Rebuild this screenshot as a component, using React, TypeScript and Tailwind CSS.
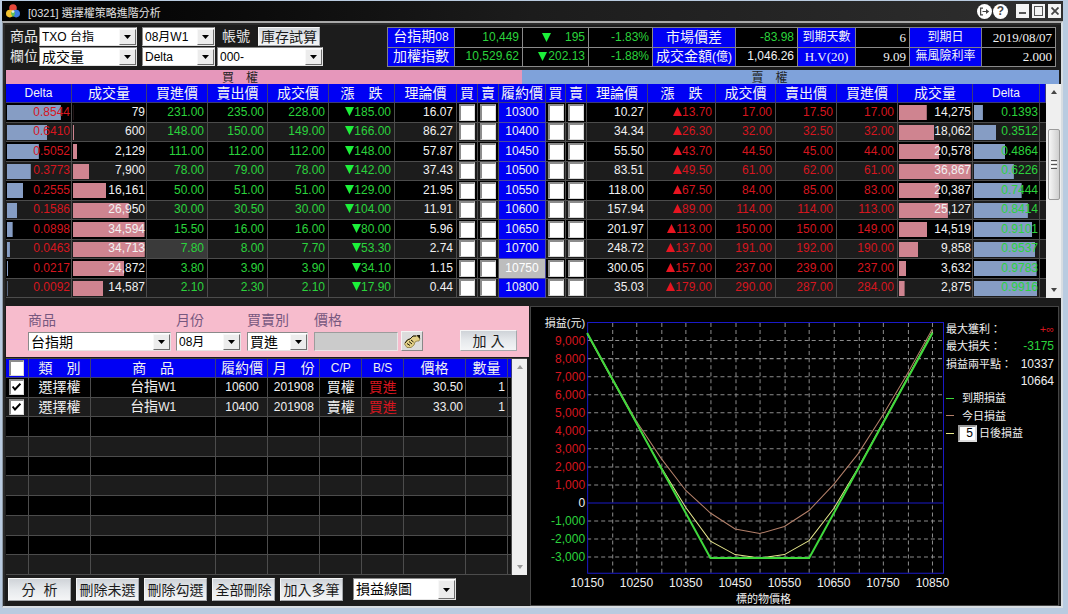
import React from "react";

type Tone = "green" | "red" | "white";

const toneClass: Record<Tone, string> = {
  green: "text-[#2bd33c]",
  red: "text-[#d6161f]",
  white: "text-[#f2f2f2]",
};

interface Side {
  delta: string;
  volume: string;
  bid: string;
  ask: string;
  last: string;
  change: string;
  theory: string;
}

interface OptionRow {
  strike: string;
  call: Side;
  put: Side;
}

const raw: string[][] = [
  ["0.8544", "79", "231.00", "235.00", "228.00", "185.00", "16.07", "10300", "10.27", "13.70", "17.00", "17.50", "17.00", "14,275", "0.1393"],
  ["0.6410", "600", "148.00", "150.00", "149.00", "166.00", "86.27", "10400", "34.34", "26.30", "32.00", "32.50", "32.00", "18,062", "0.3512"],
  ["0.5052", "2,129", "111.00", "112.00", "112.00", "148.00", "57.87", "10450", "55.50", "43.70", "44.50", "45.00", "44.00", "20,578", "0.4864"],
  ["0.3773", "7,900", "78.00", "79.00", "78.00", "142.00", "37.43", "10500", "83.51", "49.50", "61.00", "62.00", "61.00", "36,867", "0.6226"],
  ["0.2555", "16,161", "50.00", "51.00", "51.00", "129.00", "21.95", "10550", "118.00", "67.50", "84.00", "85.00", "83.00", "20,387", "0.7444"],
  ["0.1586", "26,950", "30.00", "30.50", "30.00", "104.00", "11.91", "10600", "157.94", "89.00", "114.00", "114.00", "113.00", "25,127", "0.8414"],
  ["0.0898", "34,594", "15.50", "16.00", "16.00", "80.00", "5.96", "10650", "201.97", "113.00", "150.00", "150.00", "149.00", "14,519", "0.9101"],
  ["0.0463", "34,713", "7.80", "8.00", "7.70", "53.30", "2.74", "10700", "248.72", "137.00", "191.00", "192.00", "190.00", "9,858", "0.9537"],
  ["0.0217", "24,872", "3.80", "3.90", "3.90", "34.10", "1.15", "10750", "300.05", "157.00", "237.00", "239.00", "237.00", "3,632", "0.9783"],
  ["0.0092", "14,587", "2.10", "2.30", "2.10", "17.90", "0.44", "10800", "35.03", "179.00", "290.00", "287.00", "284.00", "2,875", "0.9916"],
];

const options: OptionRow[] = raw.map((r) => ({
  strike: r[7],
  call: { delta: r[0], volume: r[1], bid: r[2], ask: r[3], last: r[4], change: r[5], theory: r[6] },
  put: { theory: r[8], change: r[9], last: r[10], ask: r[11], bid: r[12], volume: r[13], delta: r[14] },
}));

const toNumber = (s: string) => Number(s.replace(/,/g, ""));
const maxCall = Math.max(...options.map((o) => toNumber(o.call.volume)));
const maxPut = Math.max(...options.map((o) => toNumber(o.put.volume)));

interface SelectProps {
  label: string;
  value: string;
  className: string;
  latin?: boolean;
  id?: string;
}

function Select({ label, value, className, latin, id }: SelectProps) {
  return (
    <span className={`relative inline-flex shrink-0 ${className}`}>
      <select
        id={id}
        aria-label={label}
        defaultValue={value}
        className={`h-full w-full appearance-none border border-[#8a8a8a] border-r-[#e4e4e4] border-b-[#e4e4e4] bg-white pl-[2px] leading-[16px] text-black outline-none ${
          latin ? "text-[12px]" : "text-[14px]"
        }`}
      >
        <option>{value}</option>
      </select>
      <span className="pointer-events-none absolute top-[2px] right-[1px] bottom-[1px] flex w-[17px] items-center justify-center border border-[#f8f8f8] border-r-[#6e6e6e] border-b-[#6e6e6e] bg-[#ececec]">
        <svg viewBox="0 0 7 4" className="h-1 w-[7px]" aria-hidden="true">
          <path d="M0 0h7L3.5 4z" fill="#000" />
        </svg>
      </span>
    </span>
  );
}

function PushButton({ children, className }: { children: React.ReactNode; className: string }) {
  return (
    <button
      type="button"
      className={`shrink-0 border border-[#f6f6f6] border-r-[#a5a8ac] border-b-[#a5a8ac] bg-linear-to-b from-[#cfd3d8] via-[#e6e9ec] to-[#f4f5f6] text-[14px] leading-[18px] whitespace-pre text-[#1a1a1a] ${className}`}
    >
      {children}
    </button>
  );
}

function TitleBar() {
  return (
    <header className="flex h-[20px] items-center bg-linear-to-r from-[#020202] via-[#1c1c1c] to-[#2f2f2f] pr-[2px] pl-1">
      <svg viewBox="0 0 14 14" className="h-[14px] w-[14px]" aria-hidden="true">
        <circle cx="7" cy="4" r="3.8" fill="#e8483a" />
        <circle cx="3.8" cy="9.6" r="3.8" fill="#f2c230" />
        <circle cx="10.2" cy="9.6" r="3.8" fill="#3d7be0" />
        <path d="M7 6.2a3.8 3.8 0 0 0-1.6 4.6L7 13.2l1.6-2.4A3.8 3.8 0 0 0 7 6.2z" fill="#5fbf5a" />
        <circle cx="7" cy="7.6" r="1.4" fill="#fff" opacity=".8" />
      </svg>
      <h1 className="ml-[8px] pt-1 text-[11px] leading-[16px] text-[#e0e0e0]">[0321] 選擇權策略進階分析</h1>
      <div className="ml-auto flex items-center">
        <button type="button" aria-label="匯出" className="flex h-[15px] w-[15px] items-center justify-center rounded-full bg-white">
          <svg viewBox="0 0 11 9" className="h-[9px] w-[11px]" fill="none" stroke="#444" strokeWidth="1.2">
            <path d="M4 1.1H1.600v6.800H4M3.500 4.500h5" />
            <path d="M7 2l3.200 2.500L7 7z" fill="#444" stroke="none" />
          </svg>
        </button>
        <button type="button" aria-label="說明" className="ml-px flex h-[15px] w-[15px] items-center justify-center rounded-full bg-white text-[12px] leading-none font-bold text-[#444]">
          ?
        </button>
        <button type="button" aria-label="最小化" className="ml-[8px] flex h-[14px] w-[13px] items-end justify-center bg-[#f4f4f4] pb-[4px]">
          <span className="h-[2px] w-[7px] bg-[#555]" />
        </button>
        <button type="button" aria-label="最大化" className="ml-[3px] flex h-[14px] w-[13px] items-center justify-center bg-[#f4f4f4]">
          <span className="h-[10px] w-[9px] border border-[#555]" />
        </button>
        <button type="button" aria-label="關閉" className="ml-[3px] flex h-[14px] w-[13px] items-center justify-center bg-[#f4f4f4]">
          <svg viewBox="0 0 8 8" className="h-2 w-2" stroke="#444" strokeWidth="1.8">
            <path d="M.5.5l7 7M7.500.5l-7 7" />
          </svg>
        </button>
      </div>
    </header>
  );
}

const statLabel = "border border-[#7f7f8c] bg-[#0000f4] p-0 text-center text-[14px] font-normal text-[#f4f4f4]";
const statMing = "border border-[#7f7f8c] bg-[#0000f4] p-0 text-center font-['Liberation_Serif','Noto_Sans_CJK_TC',serif] text-[12px] font-normal text-[#f4f4f4]";
const statValue = "border border-[#8a8a8a] bg-black px-[3px] text-right text-[12px]";
const mingValue = "border border-[#8a8a8a] bg-black px-[3px] text-right font-['Liberation_Serif','Noto_Sans_CJK_TC',serif] text-[13px] text-[#f2f2f2]";

function Arrow({ dir }: { dir: "up" | "down" }) {
  return (
    <svg viewBox="0 0 9 9" className="inline-block h-[9px] w-[9px] shrink-0 self-center align-[0px]" aria-hidden="true">
      <path d={dir === "down" ? "M0 0h9L4.500 9z" : "M0 9h9L4.500 0z"} fill={dir === "down" ? "#1cf03a" : "#e81420"} />
    </svg>
  );
}

function Stats() {
  return (
    <table className="h-[40px] w-[668px] min-w-0 table-fixed border-collapse leading-[17px] whitespace-nowrap">
      <colgroup>
        {[67, 68, 66, 64, 83, 62, 58, 54, 72, 74].map((w, i) => (
          <col key={i} style={{ width: w }} />
        ))}
      </colgroup>
      <tbody>
        <tr>
          <th scope="row" className={statLabel}>台指期<span className="text-[12px]">08</span></th>
          <td className={`${statValue} ${toneClass.green}`}>10,449</td>
          <td className={`${statValue} ${toneClass.green}`}>
            <span className="flex justify-between pl-[16px]"><Arrow dir="down" />195</span>
          </td>
          <td className={`${statValue} ${toneClass.green}`}>-1.83%</td>
          <th scope="row" className={statLabel}>市場價差</th>
          <td className={`${statValue} ${toneClass.green}`}>-83.98</td>
          <th scope="row" className={statMing}>到期天數</th>
          <td className={mingValue}>6</td>
          <th scope="row" className={statMing}>到期日</th>
          <td className={mingValue}>2019/08/07</td>
        </tr>
        <tr>
          <th scope="row" className={statLabel}>加權指數</th>
          <td className={`${statValue} ${toneClass.green}`}>10,529.62</td>
          <td className={`${statValue} ${toneClass.green}`}>
            <span className="flex justify-between pl-[12px]"><Arrow dir="down" />202.13</span>
          </td>
          <td className={`${statValue} ${toneClass.green}`}>-1.88%</td>
          <th scope="row" className={statLabel}>成交金額<span className="text-[12px]">(億)</span></th>
          <td className={`${statValue} ${toneClass.white}`}>1,046.26</td>
          <th scope="row" className={statMing}><span className="text-[13px]">H.V(20)</span></th>
          <td className={mingValue}>9.09</td>
          <th scope="row" className={statMing}>無風險利率</th>
          <td className={mingValue}>2.000</td>
        </tr>
      </tbody>
    </table>
  );
}

function Filters() {
  return (
    <section className="flex justify-between bg-[#1c1c1c] py-[2px] pr-[5px] pl-[5px]">
      <div className="flex flex-col gap-px text-[14px] leading-[19px] text-[#e6e6e6]">
        <div className="flex items-center">
          <span className="w-[29px]">商品</span>
          <Select label="商品" value="TXO 台指" latin className="h-[19px] w-[98px]" />
          <Select label="月份" value="08月W1" latin className="ml-[5px] h-[19px] w-[73px]" />
          <span className="ml-[7px] w-[36px]">帳號</span>
          <PushButton className="h-[19px] w-[62px]">庫存試算</PushButton>
        </div>
        <div className="flex items-center">
          <span className="w-[29px]">欄位</span>
          <Select label="欄位" value="成交量" className="h-[19px] w-[98px]" />
          <Select label="第二欄位" value="Delta" latin className="ml-[5px] h-[19px] w-[73px]" />
          <Select label="帳號" value="000-" latin className="ml-[2px] h-[19px] w-[106px]" />
        </div>
      </div>
      <Stats />
    </section>
  );
}

const quoteCols = [66, 75, 61, 60, 61, 66, 62, 21, 21, 47, 20, 21, 61, 68, 60, 61, 61, 75, 67, 6];
const quoteHeads = [
  "Delta", "成交量", "買進價", "賣出價", "成交價", "漲　跌", "理論價", "買", "賣", "履約價",
  "買", "賣", "理論價", "漲　跌", "成交價", "賣出價", "買進價", "成交量", "Delta", "",
];
const cell = "border-r border-b border-[#4c4c4c] pr-[3px] text-right";

function Bar({ value, max, tone, blue }: { value: string; max: number; tone: Tone; blue?: boolean }) {
  const share = (toNumber(value) / max) * 97;
  return (
    <td
      className={`border-r border-b border-[#4c4c4c] bg-[position:1px_2px] bg-no-repeat pr-[1px] text-right ${toneClass[tone]} ${
        blue ? "bg-[linear-gradient(#869dc4,#869dc4)]" : "bg-[linear-gradient(#cf8490,#cf8490)]"
      }`}
      style={{ backgroundSize: `${share}% 15px` }}
    >
      {value}
    </td>
  );
}

function Pick({ label }: { label: string }) {
  return (
    <td className="border-r border-b border-[#4c4c4c] p-0">
      <input
        type="checkbox"
        aria-label={label}
        className="mx-auto block h-[17px] w-4 appearance-none border-t-2 border-r border-b border-l-2 border-[#8c8c8c] border-r-[#d8d8d8] border-b-[#d8d8d8] bg-white checked:bg-[#0000f4]"
      />
    </td>
  );
}

function ScrollBar({ thumb }: { thumb?: boolean }) {
  return (
    <div className="flex w-[15px] shrink-0 flex-col items-center justify-between bg-[#efefef] py-[6px]" aria-hidden="true">
      <svg viewBox="0 0 6 4" className="h-1 w-[6px]"><path d="M3 0l3 4H0z" fill={thumb ? "#444" : "#999"} /></svg>
      {thumb && (
        <div className="mt-[35px] mb-auto flex h-[71px] w-3 flex-col items-center justify-center gap-px rounded-[2px] border border-[#9a9a9a] bg-linear-to-r from-[#f6f6f6] to-[#cfcfcf]">
          <span className="h-px w-[6px] bg-[#555]" />
          <span className="h-px w-[6px] bg-white" />
          <span className="h-px w-[6px] bg-[#555]" />
          <span className="h-px w-[6px] bg-white" />
          <span className="h-px w-[6px] bg-[#555]" />
        </div>
      )}
      <svg viewBox="0 0 6 4" className="h-1 w-[6px]"><path d="M3 4l3-4H0z" fill={thumb ? "#444" : "#999"} /></svg>
    </div>
  );
}

function Quotes() {
  return (
    <section className="ml-px">
      <div className="mt-px mr-[2px] flex h-[14px] text-[12px] leading-[16px] whitespace-pre text-[#222]">
        <div className="min-w-0 flex-[516] bg-[#e697bb]">
          <div className="pr-[48px] text-center">買　權</div>
        </div>
        <div className="min-w-0 flex-[537] bg-[#7fa2da]">
          <div className="pr-[42px] text-center">賣　權</div>
        </div>
      </div>
      <div className="flex">
        <table className="h-[214px] min-w-0 flex-1 table-fixed border-separate border-spacing-0 leading-[17px] whitespace-nowrap">
          <colgroup>
            {quoteCols.map((w, i) => (
              <col key={i} style={{ width: w }} />
            ))}
          </colgroup>
          <thead>
            <tr className="h-[19px]">
              {quoteHeads.map((h, i) => (
                <th
                  key={i}
                  className={`border-r border-b border-[#3c3c78] bg-[#0000f4] p-0 text-center leading-[18px] font-normal text-[#f4f4f4] ${
                    h === "Delta" ? "text-[12px]" : "text-[14px]"
                  }`}
                >
                  {h}
                </th>
              ))}
            </tr>
          </thead>
          <tbody>
            {options.map((o, i) => (
              <tr key={o.strike} className={i % 2 ? "bg-[#1c1c1c]" : "bg-black"}>
                <Bar value={o.call.delta} max={1} tone="red" blue />
                <Bar value={o.call.volume} max={maxCall} tone="white" />
                <td className={`${cell} ${toneClass.green} ${i === 7 ? "bg-[#3a3a3a]" : ""}`}>{o.call.bid}</td>
                <td className={`${cell} ${toneClass.green}`}>{o.call.ask}</td>
                <td className={`${cell} ${toneClass.green}`}>{o.call.last}</td>
                <td className={`${cell} ${toneClass.green}`}><Arrow dir="down" />{o.call.change}</td>
                <td className={`${cell} ${toneClass.white}`}>{o.call.theory}</td>
                <Pick label={`買進 ${o.strike} 買權`} />
                <Pick label={`賣出 ${o.strike} 買權`} />
                <td className={`border-r border-b border-[#4c4c9c] p-0 text-center ${o.strike === "10750" ? "bg-[#bdbdbd] text-white" : "bg-[#0000f4] text-[#f2f2f2]"}`}>{o.strike}</td>
                <Pick label={`買進 ${o.strike} 賣權`} />
                <Pick label={`賣出 ${o.strike} 賣權`} />
                <td className={`${cell} ${toneClass.white}`}>{o.put.theory}</td>
                <td className={`${cell} ${toneClass.red}`}><Arrow dir="up" />{o.put.change}</td>
                <td className={`${cell} ${toneClass.red}`}>{o.put.last}</td>
                <td className={`${cell} ${toneClass.red}`}>{o.put.ask}</td>
                <td className={`${cell} ${toneClass.red}`}>{o.put.bid}</td>
                <Bar value={o.put.volume} max={maxPut} tone="white" />
                <Bar value={o.put.delta} max={1} tone="green" blue />
                <td className="border-b border-[#4c4c4c] p-0" />
              </tr>
            ))}
          </tbody>
        </table>
        <ScrollBar thumb />
      </div>
    </section>
  );
}

function OrderForm() {
  return (
    <form className="flex h-[51px] items-end bg-[#f7bccd] pb-[6px] pl-[22px] text-[14px] leading-[18px] text-[#77587f]">
      <div className="flex flex-col gap-[3px]">
        <label htmlFor="product">商品</label>
        <Select id="product" label="商品" value="台指期" className="h-[19px] w-[143px]" />
      </div>
      <div className="ml-[5px] flex flex-col gap-[3px]">
        <label htmlFor="month">月份</label>
        <Select id="month" label="月份" value="08月" latin className="h-[19px] w-[65px]" />
      </div>
      <div className="ml-[6px] flex flex-col gap-[3px]">
        <label htmlFor="side">買賣別</label>
        <Select id="side" label="買賣別" value="買進" className="h-[19px] w-[61px]" />
      </div>
      <div className="ml-[6px] flex flex-col gap-[3px]">
        <label htmlFor="price">價格</label>
        <input id="price" className="h-[19px] w-[84px] border border-[#9c9c9c] border-r-[#e8e8e8] border-b-[#e8e8e8] bg-[#cbcbcb] px-1 text-black" />
      </div>
      <button type="button" aria-label="選取價格" className="ml-[3px] flex h-[20px] w-[22px] items-center justify-center border border-[#f4f4f4] border-r-[#888] border-b-[#888] bg-[#dcdcdc]">
        <svg viewBox="0 0 18 14" className="h-[14px] w-[18px]" aria-hidden="true">
          <path d="M1.500 10l2.500-4 3-1 3-3h4l3 2.500-1 2.500h-2l-2 1-1 3-3 2.500H4z" fill="#e2cf86" stroke="#8a7a3c" strokeWidth=".8" />
          <path d="M2 9l3-3.500 2-.5 3-3h3M4 9.500l3 2M6 7.500l3 2.500M8 6l2.500 2" stroke="#1e1a0a" strokeWidth="1" fill="none" />
          <path d="M13.500 1h3.500v4z" fill="#1e1a0a" />
        </svg>
      </button>
      <PushButton className="ml-[37px] h-[21px] w-[57px]">加 入</PushButton>
    </form>
  );
}

const legCols = [23, 62, 126, 52, 52, 42, 42, 62, 42, 4];
const legHeads = ["類　別", "商　品", "履約價", "月　份", "C/P", "B/S", "價格", "數量", ""];
const legs = [
  { kind: "選擇權", name: "台指", code: "W1", strike: "10600", month: "201908", cp: "買權", bs: "買進", price: "30.50", qty: "1" },
  { kind: "選擇權", name: "台指", code: "W1", strike: "10400", month: "201908", cp: "賣權", bs: "買進", price: "33.00", qty: "1" },
];
const legCell = "border-r border-b border-[#4c4c4c] p-0 text-center";
const legNumber = "border-r border-b border-[#4c4c4c] p-0 pr-[2px] text-right";

function Tick({ label, on }: { label: string; on: boolean }) {
  return (
    <span className="relative mx-auto block h-4 w-[15px]">
      <input
        type="checkbox"
        aria-label={label}
        defaultChecked={on}
        className="peer block h-4 w-[15px] appearance-none border-t-2 border-r border-b border-l-2 border-[#8c8c8c] border-r-[#d8d8d8] border-b-[#d8d8d8] bg-white"
      />
      <svg viewBox="0 0 9 8" className="pointer-events-none absolute top-1 left-[3px] hidden h-2 w-[9px] peer-checked:block" fill="none" stroke="#000" strokeWidth="2">
        <path d="M.6 3.500l2.400 3L8.400.8" />
      </svg>
    </span>
  );
}

function Legs() {
  return (
    <div className="mt-px mr-[2px] flex border-t border-[#444]">
      <table className="h-[216px] min-w-0 flex-1 table-fixed border-separate border-spacing-0 leading-[17px] whitespace-nowrap text-[#f0f0f0]">
        <colgroup>
          {legCols.map((w, i) => (
            <col key={i} style={{ width: w }} />
          ))}
        </colgroup>
        <thead>
          <tr className="h-[19px] bg-[#0000f4]">
            <th className="border-r border-b border-[#3c3c78] p-0"><Tick label="全選" on={false} /></th>
            {legHeads.map((h, i) => (
              <th
                key={i}
                className={`border-r border-b border-[#3c3c78] p-0 text-center leading-[17px] font-normal ${h.includes("/") ? "text-[12px]" : "text-[14px]"}`}
              >
                {h}
              </th>
            ))}
          </tr>
        </thead>
        <tbody>
          {legs.map((l, i) => (
            <tr key={l.strike} className={`h-[19px] ${i % 2 ? "bg-[#1c1c1c]" : "bg-black"}`}>
              <td className={legCell}><Tick label={`${l.name}${l.code} ${l.strike}`} on /></td>
              <td className={`${legCell} text-[14px]`}>{l.kind}</td>
              <td className={legCell}><span className="text-[14px]">{l.name}</span>{l.code}</td>
              <td className={legCell}>{l.strike}</td>
              <td className={legCell}>{l.month}</td>
              <td className={`${legCell} text-[14px]`}>{l.cp}</td>
              <td className={`${legCell} text-[14px] ${toneClass.red}`}>{l.bs}</td>
              <td className={legNumber}>{l.price}</td>
              <td className={legNumber}>{l.qty}</td>
              <td className={legCell} />
            </tr>
          ))}
          {Array.from({ length: 8 }, (_, i) => (
            <tr key={i} className={`h-[19px] ${i % 2 ? "bg-[#1c1c1c]" : "bg-black"}`}>
              {legCols.map((_, c) => (
                <td key={c} className={legCell} />
              ))}
            </tr>
          ))}
        </tbody>
      </table>
      <ScrollBar />
    </div>
  );
}

function Actions() {
  return (
    <div className="flex gap-[5px] px-[2px] pt-[3px] pb-[4px]">
      {["分  析", "刪除未選", "刪除勾選", "全部刪除", "加入多筆"].map((t) => (
        <PushButton key={t} className="h-[23px] w-[63px]">{t}</PushButton>
      ))}
      <Select label="圖表" value="損益線圖" className="ml-[5px] h-[22px] w-[103px]" />
    </div>
  );
}

/* Plot area starts at x 56; the zero line is at y 195.5, with 18 units per 1,000. */
const X0 = 56;
const STEP = 24.6;
const ZERO = 195.5;
const UNIT = 18;

const line = (ys: number[]) => ys.map((y, i) => `${(X0 + i * STEP).toFixed(1)},${y}`).join(" ");
const today = line([26, 70, 114, 151, 183, 205.5, 221.5, 226, 219, 203, 177, 146, 107.5, 66, 22]);
const later = line([27, 71.5, 116, 160, 200, 233.5, 247, 250.5, 247, 233, 201, 160, 115, 70, 25]);

function Chart() {
  return (
    <svg viewBox="0 0 412 297" className="block h-auto min-w-0 flex-1 overflow-visible text-[12px]" role="img" aria-label="損益線圖">
      {Array.from({ length: 14 }, (_, i) => Math.round(X0 + (i + 1) * STEP) + 0.5).map((x) => (
        <path key={x} d={`M${x} 16V265`} stroke="#8c8c8c" strokeDasharray="4 3" />
      ))}
      {[9, 8, 7, 6, 5, 4, 3, 2, 1, 0, -1, -2, -3].map((k) => {
        const y = ZERO - k * UNIT;
        const fill = k > 0 ? "#d6161f" : k < 0 ? "#2bd33c" : "#f0f0f0";
        return (
          <g key={k}>
            <path d={`M56 ${y}H411`} stroke={k === 0 ? "#1a1ac8" : "#8c8c8c"} strokeDasharray={k === 0 ? undefined : "4 3"} />
            <text x="54" y={y + 4} textAnchor="end" fill={fill}>{k === 0 ? "0" : `${k},000`}</text>
          </g>
        );
      })}
      <path d="M56.500 15.500H411.500V265.500H56.500z" fill="none" stroke="#1a1ac8" />
      <polyline points={today} fill="none" stroke="#b4806a" />
      <polyline points={later} fill="none" stroke="#e6e68c" />
      <path d="M56 26L179 250.500H277.500L400.500 26" fill="none" stroke="#3fd83c" strokeWidth="2" />
      <text x="54" y="20" textAnchor="end" fill="#f0f0f0" fontSize="11">損益(元)</text>
      {["10150", "10250", "10350", "10450", "10550", "10650", "10750", "10850"].map((t, i) => (
        <text key={t} x={X0 + i * 2 * STEP} y="279" textAnchor="middle" fill="#f0f0f0">{t}</text>
      ))}
      <text x="232" y="295" textAnchor="middle" fill="#f0f0f0" fontSize="11">標的物價格</text>
    </svg>
  );
}

function Legend() {
  return (
    <div className="mt-[13px] grid h-[122px] w-[114px] shrink-0 grid-rows-7 items-center pr-1 pl-[2px] text-[11px] leading-[16px] text-[#f0f0f0]">
      <div className="flex justify-between">最大獲利：<span className="text-[11px] text-[#d6161f]">+∞</span></div>
      <div className="flex justify-between">最大損失：<span className="text-[12px] text-[#2bd33c]">-3175</span></div>
      <div className="flex justify-between whitespace-nowrap">損益兩平點：<span className="text-[12px]">10337</span></div>
      <div className="text-right text-[12px]">10664</div>
      <div className="flex items-center"><span className="mr-[8px] h-px w-2 bg-[#3fd83c]" />到期損益</div>
      <div className="flex items-center"><span className="mr-[8px] h-px w-2 bg-[#b4806a]" />今日損益</div>
      <label className="flex items-center">
        <span className="mr-[4px] h-px w-2 bg-[#e6e68c]" />
        <input defaultValue="5" className="mr-[2px] h-[17px] w-[19px] border-2 border-[#999] border-r-[#ddd] border-b-[#ddd] bg-white pr-[2px] text-right text-[12px] leading-none text-black" />
        日後損益
      </label>
    </div>
  );
}

export default function App() {
  return (
    <div className="min-h-[614px] bg-[#b9cbe0] pt-px pr-[5px] pb-[7px] pl-[2px] font-['Liberation_Sans','Noto_Sans_CJK_TC',sans-serif] text-[12px]">
      <TitleBar />
      <div className="border-t-2 border-r-2 border-b-2 border-l border-[#d8dde2] border-t-[#a8a8a8] border-l-[#8e9aa8] bg-[#1c1c1c]">
        <main className="border-t-2 border-l-2 border-[#2a2a2a]">
          <Filters />
          <Quotes />
          <div className="mt-[8px] mr-[2px] ml-px flex">
            <div className="min-w-0 flex-[524] bg-[#1c1c1c]">
              <OrderForm />
              <Legs />
              <Actions />
            </div>
            <div className="ml-px flex min-w-0 flex-[528] items-start overflow-hidden border border-[#444] bg-black">
              <Chart />
              <Legend />
            </div>
          </div>
        </main>
      </div>
    </div>
  );
}
